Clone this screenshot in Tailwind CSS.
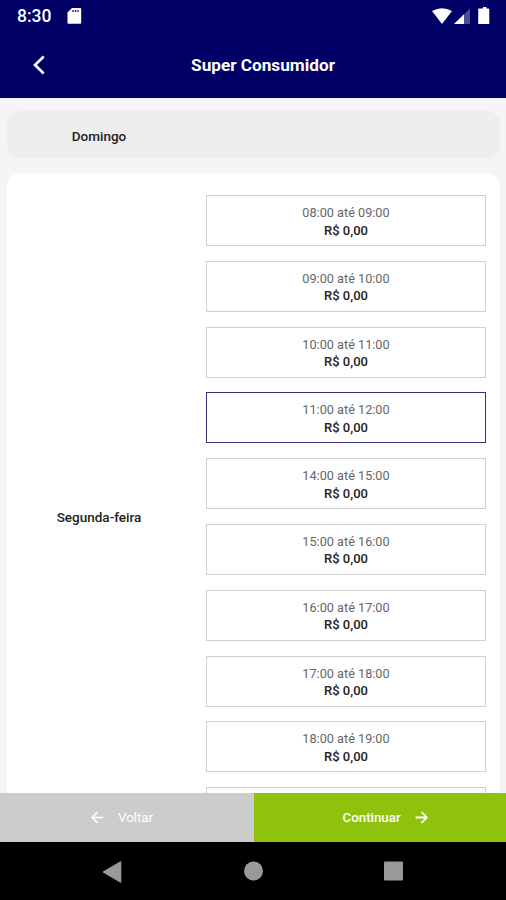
<!DOCTYPE html>
<html lang="pt-BR">
<head>
    <meta charset="UTF-8">
    <meta name="viewport" content="width=device-width, initial-scale=1.0">
    <title>Super Consumidor</title>
    <script src="https://cdn.jsdelivr.net/npm/@tailwindcss/browser@4"></script>
</head>
<body class="flex flex-col h-screen overflow-hidden bg-[#f5f5f5] font-['Roboto',sans-serif]">
    <!-- Status bar -->
    <div class="h-8 shrink-0 bg-[#000066] text-white flex items-center pl-[17px] pr-4">
        <span class="text-[17.5px] leading-8 font-medium w-[50px]">8:30</span>
        <svg class="w-[15px] h-4" viewBox="0 0 15 16" fill="white">
            <path d="M5 0h8.200a1 1 0 0 1 1 1v13.800a1 1 0 0 1-1 1H1.500a1 1 0 0 1-1-1V4.500z"/>
            <path d="M6 2v2M8.500 2v2M11 2v2" stroke="#000066" stroke-width="1.500" opacity=".8"/>
        </svg>
        <svg class="ml-auto w-[58px] h-[18px]" viewBox="0 0 58 18" fill="white">
            <path d="M0 4Q10 -1.500 20 4L10 17z"/>
            <path d="M38 1.500V17H22z" opacity=".3"/>
            <path d="M32 7.300V17H22z"/>
            <path d="M49.500 1.500h1.500V0h3.500v1.500h2q.8 0 .8.800V17H46.200V2.300q0-.8.800-.8z"/>
        </svg>
    </div>

    <!-- App header -->
    <div class="relative h-[66px] shrink-0 bg-[#000066] text-white flex items-center justify-center pl-5 pt-[2px]">
        <svg class="absolute left-[32px] top-[23px] w-[14px] h-[20px]" viewBox="0 0 14 20" fill="none" stroke="white" stroke-width="2.600">
            <path d="M11.700 1.500L3 10l8.700 8.500"/>
        </svg>
        <h1 class="text-[17.2px] font-bold">Super Consumidor</h1>
    </div>

    <!-- Day list -->
    <div class="flex-1 min-h-0 overflow-hidden pl-[7px] pr-[6px] pt-[13px] flex flex-col gap-[14px]">
        <div class="h-12 shrink-0 rounded-[14px] bg-[#eeeeee] flex items-center">
            <div class="w-[184px] pt-[2px] text-center text-[13.5px] font-medium text-[#222]">Domingo</div>
        </div>
        <div class="shrink-0 rounded-[14px] bg-white flex items-center pr-[14px] py-[22px]">
            <div class="w-[184px] pt-[2px] text-center text-[13.5px] font-medium text-[#222]">Segunda-feira</div>
            <div id="slots" class="ml-auto w-[280px] flex flex-col gap-[14.800px]"></div>
        </div>
    </div>

    <!-- Actions -->
    <div class="h-[49px] shrink-0 flex text-white text-[13.3px] font-medium">
        <div class="w-[253.5px] bg-[#cccccc] flex items-center pl-[91px] gap-[14px]">
            <svg class="w-[13px] h-[13px]" viewBox="0 0 13 13" fill="none" stroke="white" stroke-width="1.700">
                <path d="M12.500 6.500H1.500M6.500 1L1.200 6.500l5.300 5.500"/>
            </svg>
            <span class="font-normal">Voltar</span>
        </div>
        <div class="flex-1 bg-[#8fc20d] flex items-center pl-[89px] gap-[14px]">
            <span>Continuar</span>
            <svg class="w-[13px] h-[13px]" viewBox="0 0 13 13" fill="none" stroke="white" stroke-width="1.800">
                <path d="M.5 6.500h11M6.500 1l5.300 5.500L6.500 12"/>
            </svg>
        </div>
    </div>

    <!-- Android navigation -->
    <div class="h-[58px] shrink-0 bg-black">
        <svg class="w-[506px] h-[58px]" viewBox="0 0 506 58" fill="#999999">
            <path d="M120 19.500q1.300-.8 1.300.5v20q0 1.300-1.300.5L103 30.400q-.8-.5 0-1z"/>
            <circle cx="253.500" cy="29" r="9.500"/>
            <rect x="384" y="19.500" width="19" height="19" rx="1"/>
        </svg>
    </div>

    <script>
        const hours = [
            ["08:00", "09:00"], ["09:00", "10:00"], ["10:00", "11:00"], ["11:00", "12:00"],
            ["14:00", "15:00"], ["15:00", "16:00"], ["16:00", "17:00"], ["17:00", "18:00"],
            ["18:00", "19:00"],
        ];
        const selected = "11:00";

        const slots = hours.map(([start, end]) => `
            <div class="h-[51px] border ${start === selected ? "border-[#33336f]" : "border-[#d0d0d0]"} pt-[8px] text-center text-[13px] leading-[17.500px]">
                <div class="text-[12.700px] text-[#666]">${start} até ${end}</div>
                <div class="font-medium text-[#222]">R$ 0,00</div>
            </div>
        `);
        // next slot, still below the fold
        slots.push(`<div class="h-[51px] border border-[#d0d0d0]"></div>`);
        document.getElementById("slots").innerHTML = slots.join("");
    </script>
</body>
</html>
